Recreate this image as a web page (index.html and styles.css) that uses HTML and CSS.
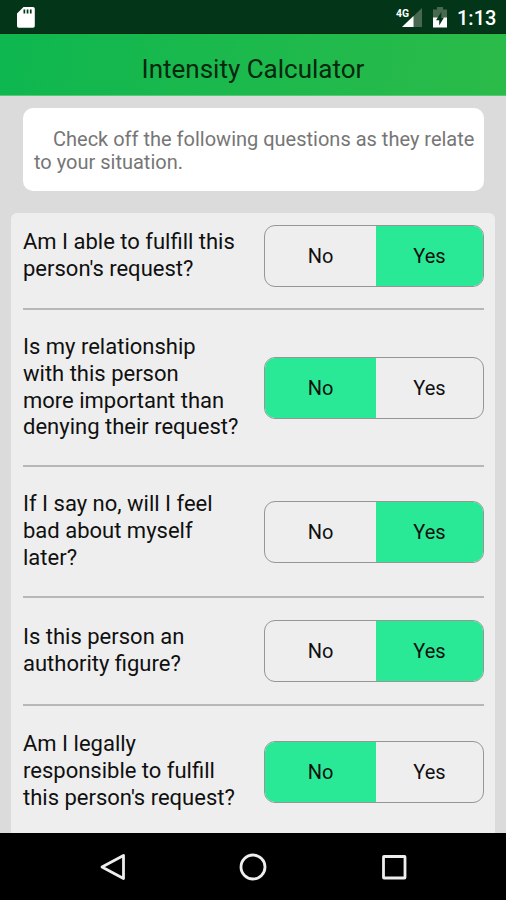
FILE: index.html
```html
<!DOCTYPE html>
<html lang="en">
<head>
<meta charset="utf-8">
<title>Intensity Calculator</title>
<link rel="stylesheet" href="styles.css">
</head>
<body>
<div class="status">
  <svg class="sd" width="18" height="21" viewBox="0 0 18 21"><path fill="#fff" d="M6.5 0H16a1.8 1.8 0 0 1 1.8 1.8v17.1a1.8 1.8 0 0 1-1.8 1.8H1.8A1.8 1.8 0 0 1 0 18.900V6.500z"/><path fill="#033518" d="M6.500 2.500h1.700v4H6.500zM9.700 2.500h1.700v4H9.700zM12.900 2.500h1.700v4h-1.700z"/></svg>
  <svg class="signal" width="27" height="21" viewBox="0 0 27 21"><path fill="#48684f" d="M26 1v19H6z"/><path fill="#fff" d="M17.500 9v11H6z"/><text class="net" x="0" y="9.500" textLength="13" lengthAdjust="spacingAndGlyphs">4G</text></svg>
  <svg class="battery" width="14" height="21" viewBox="0 0 14 21"><path fill="#48684f" d="M4 0h6v2.500h4V11H0V2.500h4z"/><path fill="#fff" d="M0 10.500h14V20.500H0z"/><path fill="#033518" d="M8.300 5 3 13.200h3.200V18.500L11 10.500H8.300z"/></svg>
  <span class="clock">1:13</span>
</div>
<header class="bar"><h1>Intensity Calculator</h1></header>
<main>
  <p class="intro">Check off the following questions as they relate<br>to your situation.</p>
  <section class="list">
    <div class="row first"><div class="q">Am I able to fulfill this<br>person's request?</div><div class="toggle"><span>No</span><span class="on">Yes</span></div></div>
    <div class="row four"><div class="q">Is my relationship<br>with this person<br>more important than<br>denying their request?</div><div class="toggle"><span class="on">No</span><span>Yes</span></div></div>
    <div class="row three"><div class="q">If I say no, will I feel<br>bad about myself<br>later?</div><div class="toggle"><span>No</span><span class="on">Yes</span></div></div>
    <div class="row two"><div class="q">Is this person an<br>authority figure?</div><div class="toggle"><span>No</span><span class="on">Yes</span></div></div>
    <div class="row three"><div class="q">Am I legally<br>responsible to fulfill<br>this person's request?</div><div class="toggle"><span class="on">No</span><span>Yes</span></div></div>
  </section>
</main>
<nav class="nav">
  <svg width="28" height="30" viewBox="0 0 28 30"><path d="M24.500 3.500v23L3 15z"/></svg>
  <svg width="28" height="30" viewBox="0 0 28 30"><circle cx="14" cy="15" r="12"/></svg>
  <svg width="28" height="30" viewBox="0 0 28 30"><rect x="3.500" y="4.500" width="21.500" height="21.500" rx=".5"/></svg>
</nav>
</body>
</html>
```
FILE: styles.css
```css
* { box-sizing: border-box; }
body {
  margin: 0;
  width: 506px;
  height: 900px;
  display: flex;
  flex-direction: column;
  overflow: hidden;
  background: #dbdbdb;
  font-family: Roboto, "Liberation Sans", sans-serif;
  color: #101010;
}
.status {
  height: 34px;
  flex: none;
  display: flex;
  align-items: flex-start;
  padding: 7px 11px 0 17px;
  background: #033518;
  border-bottom: 1px solid #022a10;
}
.signal { margin-left: auto; margin-right: 10px; }
.battery { margin-right: 10px; }
.net { font-size: 11px; font-weight: 700; fill: #fff; }
.clock {
  width: 38px;
  font-size: 20px;
  line-height: 22px;
  font-weight: 500;
  color: #fff;
  white-space: nowrap;
}
.bar {
  height: 62px;
  flex: none;
  background: linear-gradient(100deg, #0eb750, #2bbb49);
  border-bottom: 1px solid #56c878;
  text-align: center;
}
h1 {
  margin: 0;
  padding-top: 20px;
  font-size: 26px;
  line-height: 31px;
  font-weight: 400;
  color: #06280f;
}
main { flex: 1; min-height: 0; overflow: hidden; padding: 12px 11px 0; }
.intro {
  height: 83px;
  margin: 0 11px 22px 12px;
  padding: 20px 0 0 11px;
  border-radius: 10px;
  background: #fff;
  color: #767676;
  font-size: 20px;
  line-height: 23px;
  text-indent: 19px;
  white-space: nowrap;
}
.list { background: #eee; border-radius: 6px; padding: 0 11px 0 12px; height: 640px; }
.row {
  display: flex;
  align-items: center;
  justify-content: space-between;
  border-bottom: 2px solid #b7b7b7;
}
.row:last-child { border-bottom: 0; }
.first { height: 97px; padding: 0 0 9px; }
.four { height: 157px; }
.three { height: 131px; }
.two { height: 108px; }
.q { font-size: 22px; line-height: 26.700px; white-space: nowrap; }
.toggle {
  width: 220px;
  height: 62px;
  flex: none;
  display: grid;
  grid-template-columns: 111px 1fr;
  border: 1.500px solid #969696;
  border-radius: 11px;
  overflow: hidden;
  font-size: 20px;
}
.toggle span { display: flex; align-items: center; justify-content: center; }
.toggle .on { background: #29e996; }
.nav {
  height: 67px;
  flex: none;
  display: flex;
  justify-content: center;
  align-items: center;
  gap: 112.500px;
  background: #000;
}
.nav svg { fill: none; stroke: #eee; stroke-width: 2.800; stroke-linejoin: round; }
```
